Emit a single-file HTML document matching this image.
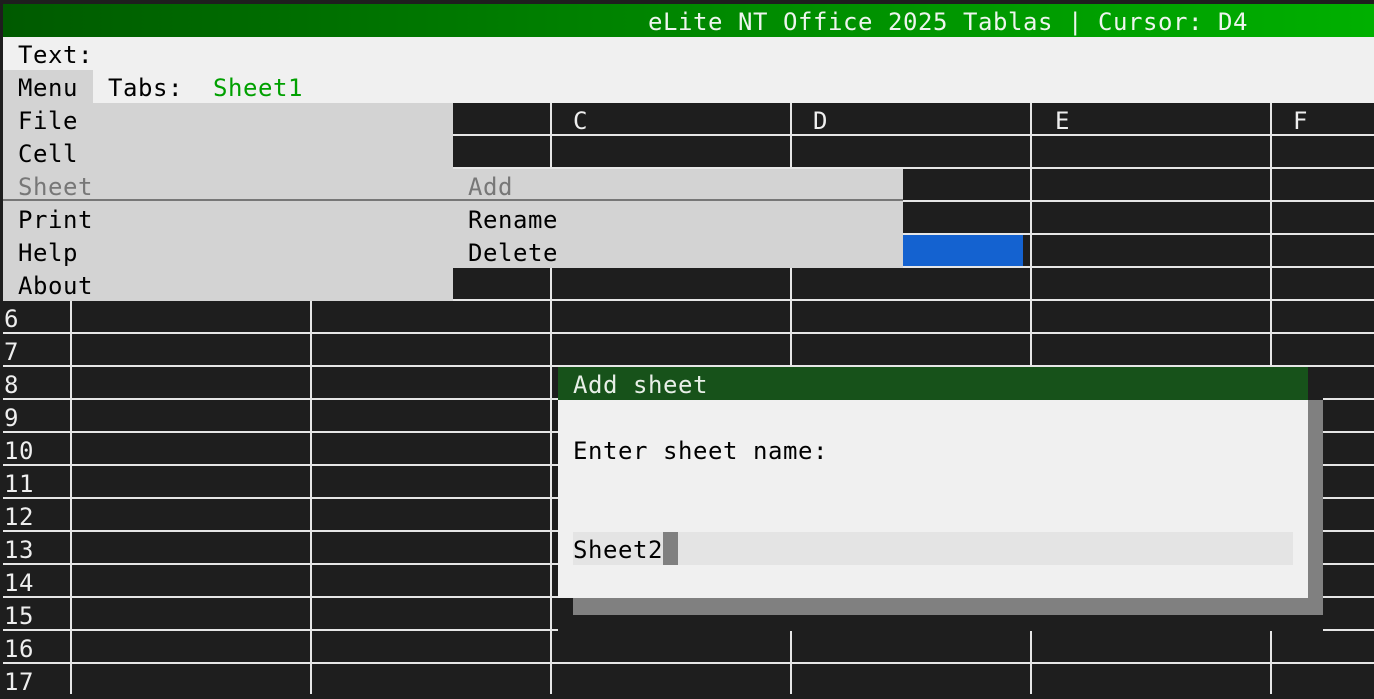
<!DOCTYPE html>
<html><head><meta charset="utf-8"><style>
*{margin:0;padding:0;box-sizing:border-box}
body{width:1374px;height:694px;background:#1e1e1e;position:relative;overflow:hidden;font-family:"DejaVu Sans Mono","Liberation Mono",monospace;font-size:24px;letter-spacing:0.55px;line-height:33px;color:#000}
.a{position:absolute;white-space:pre;padding-top:2px}
</style></head><body>
<div class="a" style="left:3px;top:4px;width:1371px;height:33px;background:linear-gradient(90deg,#005a00,#007f00 40%,#00b000);color:#eef5ee;padding-left:645px">eLite NT Office 2025 Tablas | Cursor: D4</div>
<div class="a" style="left:3px;top:37px;width:1371px;height:66px;background:#f0f0f0"></div>
<div class="a" style="left:18px;top:37px">Text:</div>
<div class="a" style="left:3px;top:70px;width:90px;height:33px;background:#d3d3d3"></div>
<div class="a" style="left:18px;top:70px">Menu</div>
<div class="a" style="left:108px;top:70px">Tabs:</div>
<div class="a" style="left:213px;top:70px;color:#00a000">Sheet1</div>
<div class="a" style="left:3px;top:103px;width:1371px;height:591px;background:repeating-linear-gradient(180deg,transparent 0 31px,#e6e6e6 31px 33px)"></div>
<div class="a" style="left:70px;top:103px;width:1304px;height:591px;background:repeating-linear-gradient(90deg,#e6e6e6 0 2px,transparent 2px 240px)"></div>
<div class="a" style="left:573px;top:103px;color:#eee">C</div>
<div class="a" style="left:813px;top:103px;color:#eee">D</div>
<div class="a" style="left:1055px;top:103px;color:#eee">E</div>
<div class="a" style="left:1293px;top:103px;color:#eee">F</div>
<div class="a" style="left:4px;top:301px;color:#eee">6
7
8
9
10
11
12
13
14
15
16
17</div>
<div class="a" style="left:903px;top:235px;width:120px;height:31px;background:#1462d0"></div>
<div class="a" style="left:3px;top:103px;width:450px;height:198px;background:#d3d3d3"></div>
<div class="a" style="left:18px;top:103px">File
Cell
<span style="color:#777">Sheet</span>
Print
Help
About</div>
<div class="a" style="left:453px;top:169px;width:450px;height:99px;background:#d3d3d3"></div>
<div class="a" style="left:3px;top:199px;width:900px;height:2px;background:#777"></div>
<div class="a" style="left:468px;top:169px"><span style="color:#777">Add</span>
Rename
Delete</div>
<div class="a" style="left:558px;top:367px;width:765px;height:264px;background:#1e1e1e"></div>
<div class="a" style="left:573px;top:400px;width:750px;height:215px;background:#808080"></div>
<div class="a" style="left:558px;top:367px;width:750px;height:33px;background:#17521a;color:#e8efe8;padding-left:15px">Add sheet</div>
<div class="a" style="left:558px;top:400px;width:750px;height:198px;background:#f0f0f0"></div>
<div class="a" style="left:573px;top:433px">Enter sheet name:</div>
<div class="a" style="left:573px;top:532px;width:720px;height:33px;background:#e4e4e4"></div>
<div class="a" style="left:663px;top:532px;width:15px;height:33px;background:#808080"></div>
<div class="a" style="left:573px;top:532px">Sheet2</div>
</body></html>
